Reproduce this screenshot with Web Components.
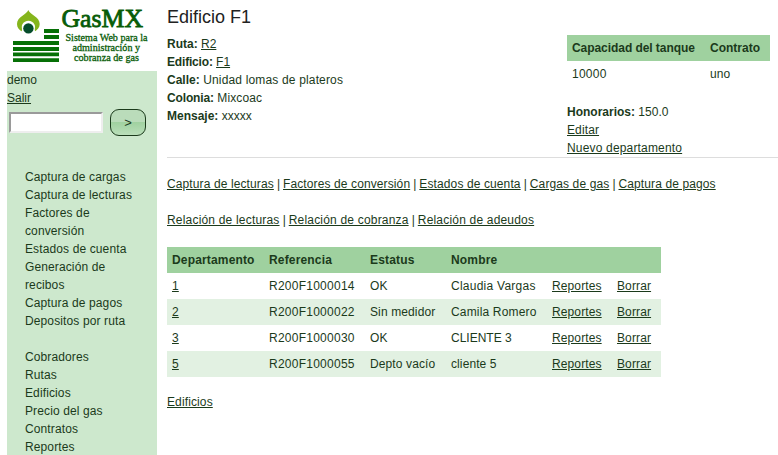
<!DOCTYPE html>
<html lang="es">
<head>
<meta charset="utf-8">
<title>GasMX - Edificio F1</title>
<style>
html, body { margin: 0; height: 100%; }
body { background: #fff; color: #1b3a1b; font: 12px/18px "Liberation Sans", Arial, sans-serif; letter-spacing: .12px; overflow: hidden; --link: #1b3a1b; --head: #9fd19f; --stripe: #e2f1e2; --side: #cde8cd; }
</style>
</head>
<body>
<gas-app></gas-app>
<script>
const define = (name, markup, setup) => customElements.define(name, class extends HTMLElement {
  constructor() {
    super();
    this.attachShadow({ mode: 'open' }).innerHTML = markup;
  }
  connectedCallback() { if (setup) setup(this, this.shadowRoot); }
});

define('gas-logo', `<style>
:host { display: block; height: 71px; letter-spacing: 0; }
svg { display: block; }
text { font-family: "Liberation Serif", serif; }
</style>
<svg width="150" height="71" viewBox="7 0 150 71">
  <path d="M28.300 10C27 14.500 17 16.500 17 24C17 27.500 19 30 22.300 31.700L34.300 31.700C37.500 30 39.700 27.500 39.700 24C39.700 16.500 29.500 14.500 28.300 10Z" fill="#85b51c"/>
  <path d="M20.800 32.500C23.500 30 20.800 27.500 22.300 24.500C25 19.500 32 19.500 34.500 24.500C36 27.500 33.500 30 36 32.500L32 34H24.500Z" fill="#fff"/>
  <circle cx="28.400" cy="28.400" r="5.200" fill="#064d2b"/>
  <path d="M44 29h15v4H44zM44 35h15v4H44zM13 41h46v4H13zM13 47h46v4H13zM13 52.500h46v3.800H13zM13 58.300h46v3.700H13z" fill="#067006"/>
  <g fill="#075c07">
    <text x="61.500" y="27" font-size="26" stroke="#075c07" stroke-width=".8" textLength="81.500" lengthAdjust="spacingAndGlyphs">GasMX</text>
    <g font-size="10.500" stroke="#075c07" stroke-width=".3">
      <text x="65.500" y="41" textLength="82" lengthAdjust="spacingAndGlyphs">Sistema Web para la</text>
      <text x="72.500" y="51" textLength="67.500" lengthAdjust="spacingAndGlyphs">administración y</text>
      <text x="74" y="61" textLength="65" lengthAdjust="spacingAndGlyphs">cobranza de gas</text>
    </g>
  </g>
</svg>`);

define('u-link', `<style>
:host { display: inline; }
a { color: var(--link); text-decoration: underline; }
</style><a href="#"><slot></slot></a>`);

define('quick-search', `<style>
:host { display: flex; align-items: center; gap: 7px; padding: 2px 0 0 2px; height: 27px; }
input { box-sizing: border-box; width: 94px; height: 21px; margin: 0; padding: 1px; border: 2px solid; border-color: #9a9a9a #eee #eee #9a9a9a; background: #fff; }
button { box-sizing: border-box; width: 36px; height: 27px; margin: 0; padding: 0; border: 1px solid #1b3a1b; border-radius: 9px; background: linear-gradient(#badcba 0 47%, #9fd19f 47%, #badfba); color: #1b3a1b; font: 13px "Liberation Sans", sans-serif; }
</style><input type="text"><button>&gt;</button>`);

define('menu-list', `<style>
:host { display: block; padding-left: 18px; width: 112px; }
::slotted(div) { display: block; }
</style><slot></slot>`);

define('side-bar', `<style>
:host { display: flex; flex-direction: column; width: 150px; flex: none; }
.panel { background: var(--side); flex: 1; }
.user { letter-spacing: 0; }
menu-list { margin-top: 32px; }
menu-list + menu-list { margin-top: 18px; }
</style>
<gas-logo></gas-logo>
<div class="panel">
  <div class="user">demo</div>
  <div class="user"><u-link>Salir</u-link></div>
  <quick-search></quick-search>
  <menu-list><div>Captura de cargas</div><div>Captura de lecturas</div><div>Factores de conversión</div><div>Estados de cuenta</div><div>Generación de recibos</div><div>Captura de pagos</div><div>Depositos por ruta</div></menu-list>
  <menu-list><div>Cobradores</div><div>Rutas</div><div>Edificios</div><div>Precio del gas</div><div>Contratos</div><div>Reportes</div></menu-list>
</div>`);

define('info-field', `<style>
:host { display: block; letter-spacing: var(--track, 0); }
b { letter-spacing: var(--label-track, 0); }
</style><b></b> <slot></slot>`, (el, root) => { root.querySelector('b').textContent = el.getAttribute('label') + ':'; });

define('data-table', `<style>
:host { display: grid; width: max-content; }
</style><slot></slot>`);

/* Column widths come from the table's --cols property. */
define('data-row', `<style>
:host { display: grid; grid-template-columns: var(--cols); }
:host([head]) { background: var(--head); font-weight: bold; }
:host([alt]) { background: var(--stripe); }
::slotted(span) { padding: 4px 0 4px 5px; white-space: nowrap; }
</style><slot></slot>`);

define('link-bar', `<style>
:host { display: block; white-space: nowrap; }
</style><slot></slot>`);

const departments = [
  ['1', 'R200F1000014', 'OK', 'Claudia Vargas', .25],
  ['2', 'R200F1000022', 'Sin medidor', 'Camila Romero', .17],
  ['3', 'R200F1000030', 'OK', 'CLIENTE 3', 0],
  ['5', 'R200F1000055', 'Depto vacío', 'cliente 5', .1]
];
const rows = departments.map(([id, ref, status, name, track], i) =>
  `<data-row${i % 2 ? ' alt' : ''}><span><u-link>${id}</u-link></span><span class="ref">${ref}</span><span>${status}</span><span style="letter-spacing:${track}px">${name}</span><span><u-link>Reportes</u-link></span><span><u-link>Borrar</u-link></span></data-row>`).join('');
const links = names => `<link-bar>${names.map(n => `<u-link>${n}</u-link>`).join('<span class="sep"> | </span>')}</link-bar>`;

define('building-page', `<style>
:host { display: block; flex: 1; min-width: 0; }
h1 { margin: 0; padding-top: 6px; height: 29px; box-sizing: content-box; font-size: 18px; line-height: 22px; font-weight: normal; letter-spacing: 0; color: #222; }
.top { display: grid; grid-template-columns: 400px 1fr; height: 122px; border-bottom: 1px solid #ddd; margin-bottom: 17px; }
.tank { --cols: 138px 65px; margin-bottom: 16px; }
.tank [head] { letter-spacing: -.06px; }
.tank [head] span + span { letter-spacing: 0; }
.ref, .num { letter-spacing: .25px; }
.depts { --cols: 97px 101px 81px 101px 65px 49px; margin: 18px 0 16px; }
.depts [head] { letter-spacing: .16px; }
.sep { letter-spacing: -.2px; }
.new { letter-spacing: .17px; }
link-bar { letter-spacing: .11px; }
link-bar + link-bar { margin-top: 18px; letter-spacing: .19px; }
</style>
<h1>Edificio F1</h1>
<section class="top">
  <div>
    <info-field label="Ruta"><u-link>R2</u-link></info-field>
    <info-field label="Edificio" style="--label-track:-.18px"><u-link>F1</u-link></info-field>
    <info-field label="Calle" style="--track:.16px">Unidad lomas de plateros</info-field>
    <info-field label="Colonia" style="--label-track:-.15px;--track:.12px">Mixcoac</info-field>
    <info-field label="Mensaje">xxxxx</info-field>
  </div>
  <div>
    <data-table class="tank"><data-row head><span>Capacidad del tanque</span><span>Contrato</span></data-row><data-row><span class="num">10000</span><span>uno</span></data-row></data-table>
    <info-field label="Honorarios">150.0</info-field>
    <div><u-link>Editar</u-link></div>
    <div class="new"><u-link>Nuevo departamento</u-link></div>
  </div>
</section>
${links(['Captura de lecturas', 'Factores de conversión', 'Estados de cuenta', 'Cargas de gas', 'Captura de pagos'])}
${links(['Relación de lecturas', 'Relación de cobranza', 'Relación de adeudos'])}
<data-table class="depts"><data-row head><span>Departamento</span><span>Referencia</span><span>Estatus</span><span>Nombre</span><span></span><span></span></data-row>${rows}</data-table>
<div><u-link>Edificios</u-link></div>`);

define('gas-app', `<style>
:host { display: flex; gap: 10px; height: 100vh; padding-left: 7px; box-sizing: border-box; }
</style><side-bar></side-bar><building-page></building-page>`);
</script>
</body>
</html>
